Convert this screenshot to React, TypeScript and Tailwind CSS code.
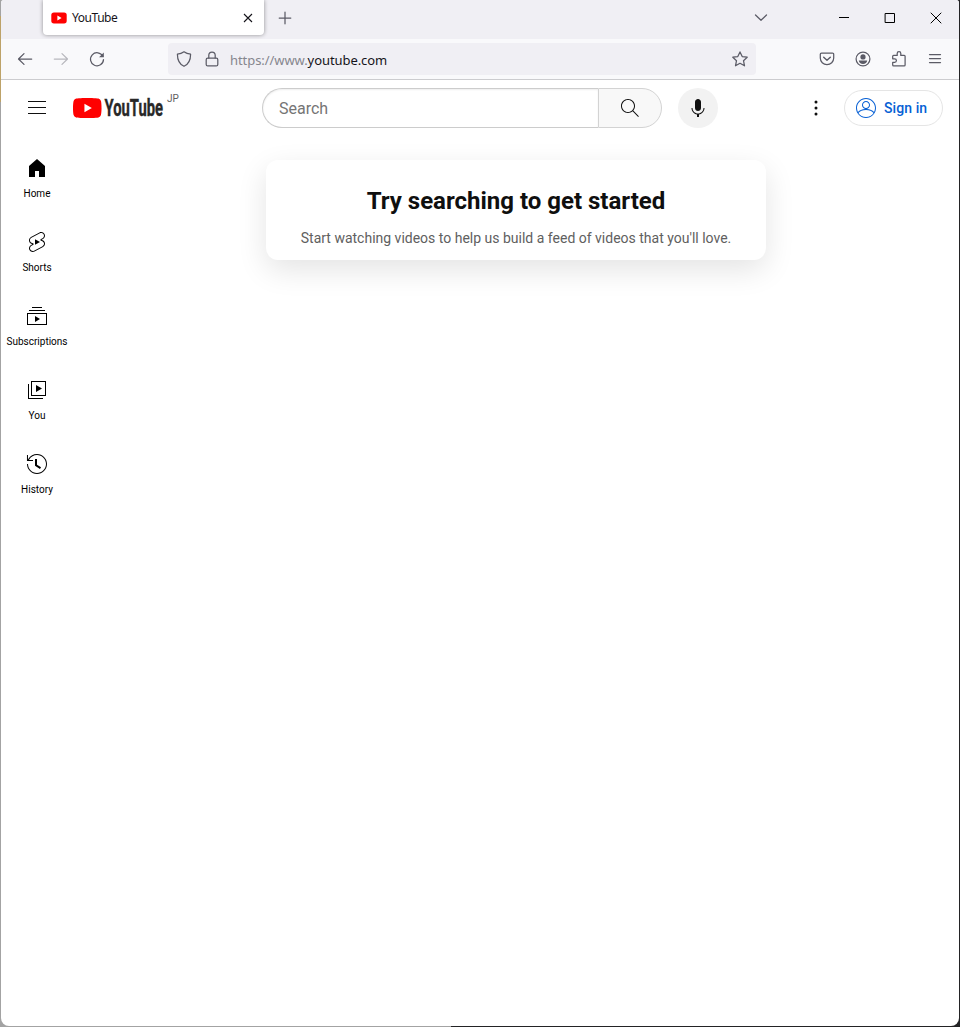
import type { ReactNode } from 'react';

const guideItems = [
  {
    label: 'Home',
    path: 'M4,10V21h6V15h4v6h6V10L12,3Z',
  },
  {
    label: 'Shorts',
    path: 'M10 14.65v-5.3L15 12l-5 2.65zm7.77-4.33c-.77-.32-1.2-.5-1.2-.5L18 9.06c1.84-.96 2.53-3.23 1.56-5.06s-3.24-2.53-5.07-1.56L6 6.94c-1.29.68-2.07 2.04-2 3.49.07 1.42.93 2.67 2.22 3.25.03.01 1.2.5 1.2.5L6 14.93c-1.83.97-2.53 3.24-1.56 5.07.97 1.83 3.24 2.53 5.07 1.56l8.5-4.5c1.29-.68 2.06-2.04 1.99-3.49-.07-1.42-.94-2.68-2.23-3.25zm-.23 5.86l-8.5 4.5c-1.34.71-3.01.2-3.72-1.14-.71-1.34-.2-3.01 1.14-3.72l2.04-1.08v-1.21l-.69-.28-1.11-.46c-.99-.41-1.65-1.35-1.7-2.41-.05-1.06.52-2.06 1.46-2.56l8.5-4.5c1.34-.71 3.01-.2 3.72 1.14.71 1.34.2 3.01-1.14 3.72L15.5 9.26v1.21l1.8.74c.99.41 1.65 1.35 1.7 2.41.05 1.06-.52 2.06-1.46 2.56z',
  },
  {
    label: 'Subscriptions',
    path: 'M10,18v-6l5,3L10,18z M17,3H7v1h10V3z M20,6H4v1h16V6z M22,9H2v12h20V9z M3,10h18v10H3V10z',
  },
  {
    label: 'You',
    path: 'm11 7 6 3.5-6 3.5V7zm7 13H4V6H3v15h15v-1zm3-2H6V3h15v15zM7 17h13V4H7v13z',
  },
  {
    label: 'History',
    path: 'M14.97,16.95L10,13.87V7h2v5.76l4.03,2.49L14.97,16.95z M22,12c0,5.51-4.49,10-10,10S2,17.51,2,12h1c0,4.96,4.04,9,9,9s9-4.04,9-9s-4.04-9-9-9C8.81,3,5.92,4.64,4.28,7.38C4.17,7.56,4.06,7.75,3.97,7.94C3.96,7.96,3.95,7.98,3.94,8H8v1H1.96V3h1v4.74C3,7.65,3.03,7.57,3.07,7.49C3.18,7.27,3.3,7.07,3.42,6.86C5.22,3.86,8.51,2,12,2C17.51,2,22,6.49,22,12z',
  },
];

const ACCOUNT =
  'M12,2C6.48,2,2,6.48,2,12c0,5.52,4.48,10,10,10s10-4.48,10-10C22,6.48,17.52,2,12,2z M12,3c4.96,0,9,4.04,9,9c0,1.42-0.34,2.76-0.93,3.96c-1.53-1.72-3.98-2.89-7.38-3.03C14.57,12.6,16,10.97,16,9c0-2.21-1.79-4-4-4C9.79,5,8,6.79,8,9c0,1.97,1.43,3.6,3.31,3.93c-3.4,0.14-5.85,1.31-7.38,3.03C3.34,14.76,3,13.42,3,12C3,7.04,7.04,3,12,3z M9,9c0-1.65,1.35-3,3-3s3,1.35,3,3c0,1.65-1.35,3-3,3S9,10.65,9,9z M12,21c-3.16,0-5.94-1.64-7.55-4.12C6.01,14.93,8.61,13.9,12,13.9c3.39,0,5.99,1.03,7.55,2.98C17.94,19.36,15.16,21,12,21z';
const SEARCH =
  'M20.87,20.17l-5.59-5.59C16.35,13.35,17,11.75,17,10c0-3.87-3.13-7-7-7s-7,3.13-7,7s3.13,7,7,7c1.75,0,3.35-0.65,4.58-1.71l5.59,5.59L20.87,20.17z M10,16c-3.31,0-6-2.69-6-6s2.69-6,6-6s6,2.69,6,6S13.31,16,10,16z';
const MIC =
  'M12 3C10.34 3 9 4.37 9 6.07V11.93C9 13.63 10.34 15 12 15C13.66 15 15 13.63 15 11.93V6.07C15 4.37 13.66 3 12 3ZM18.5 12H17.5C17.5 15.03 15.03 17.5 12 17.5C8.97 17.5 6.5 15.03 6.5 12H5.5C5.5 15.24 7.89 17.93 11 18.41V21H13V18.41C16.11 17.93 18.5 15.24 18.5 12Z';

function YtIcon({ path }: { path: string }) {
  return (
    <svg className="w-6 h-6 shrink-0" viewBox="0 0 24 24" fill="currentColor">
      <path d={path} />
    </svg>
  );
}

// 16px browser chrome glyph in a toolbar-sized button
function ChromeButton({ children, className = 'w-9' }: { children: ReactNode; className?: string }) {
  return (
    <button className={`flex items-center justify-center h-8 shrink-0 ${className}`}>
      <svg
        className="w-4 h-4 overflow-visible"
        viewBox="0 0 16 16"
        fill="none"
        stroke="currentColor"
        strokeWidth={1.25}
        strokeLinecap="round"
        strokeLinejoin="round"
      >
        {children}
      </svg>
    </button>
  );
}

function TabStrip() {
  return (
    <div className="flex items-start h-[39px] bg-[#f0eff4] pl-[42px] text-[#15141a]">
      <div className="flex items-center w-[221px] h-[35px] bg-white rounded-b-[4px] shadow-[0_0_4px_rgba(0,0,0,0.4)] pl-2 pr-2">
        <svg className="w-4 h-4" viewBox="0 0 16 16">
          <rect x="0.3" y="2.4" width="15.4" height="11" rx="2.6" fill="#f00" />
          <path d="M6.4 5.5v4.9L10.6 8z" fill="#fff" />
        </svg>
        <span className="ml-[5px] flex-1 text-[12px] leading-none tracking-[-0.45px]">YouTube</span>
        <svg className="w-4 h-4" viewBox="0 0 16 16" fill="none" stroke="currentColor" strokeWidth={1.1}>
          <path d="M4 4l8 8M12 4l-8 8" />
        </svg>
      </div>
      <div className="flex items-center flex-1 h-[35px] text-[#5b5b66]">
        <ChromeButton className="w-[42px]">
          <path d="M8 2.200v11.600M2.200 8h11.600" />
        </ChromeButton>
        <div className="flex-1" />
        <ChromeButton className="w-10">
          <path d="M2.500 5l5.500 5.300L13.500 5" />
        </ChromeButton>
        <div className="flex ml-10 text-black">
          <ChromeButton className="w-[46px]">
            <path d="M3 7.500h10" strokeWidth={1} strokeLinecap="butt" />
          </ChromeButton>
          <ChromeButton className="w-[46px]">
            <path d="M3.500 3.500h9v9h-9z" strokeWidth={1} strokeLinejoin="miter" />
          </ChromeButton>
          <ChromeButton className="w-[46px]">
            <path d="M3 3l10 10M13 3L3 13" strokeWidth={1} />
          </ChromeButton>
        </div>
      </div>
    </div>
  );
}

function Toolbar() {
  return (
    <div className="flex items-center h-[41px] bg-[#f9f9fb] border-b border-[#cccccf] pl-1.5 pr-[7px] text-[#5b5b66]">
      <ChromeButton>
        <path d="M14.700 8H1.600M7 2.600L1.500 8L7 13.400" />
      </ChromeButton>
      <div className="text-[#b8b8be]">
        <ChromeButton>
          <path d="M1.300 8H14.400M9 2.600L14.500 8L9 13.400" />
        </ChromeButton>
      </div>
      <ChromeButton>
        <path d="M13.800 5.300A6.500 6.500 0 1 0 14.500 8.600" />
        <path d="M14.800 1.500v4.700h-4.700z" fill="currentColor" stroke="none" />
      </ChromeButton>

      <div className="flex items-center w-[588px] h-8 ml-[53px] rounded bg-[#f0eff4] pl-0.5 pr-0.5">
        <ChromeButton className="w-7">
          <path d="M8 .8C6 2.300 3.800 3 1.400 3.200C1.400 9 3 13 8 15.300C13 13 14.600 9 14.600 3.200C12.200 3 10 2.300 8 .8z" />
        </ChromeButton>
        <ChromeButton className="w-7">
          <rect x="2.200" y="7.200" width="11.600" height="7.700" rx="1.500" />
          <path d="M4.800 7V4.200a3.200 3.200 0 0 1 6.400 0V7" />
        </ChromeButton>
        <span className="ml-1 flex-1 text-[13px] leading-5 tracking-[-0.07px] text-[#86868e] pt-0.5">
          https://www.<span className="text-[#15141a]">youtube.com</span>
        </span>
        <ChromeButton className="w-7">
          <path d="M8 .9l2.200 4.700l5 .6l-3.700 3.500l1 5.100L8 12.300l-4.500 2.500l1-5.100L.8 6.200l5-.6z" />
        </ChromeButton>
      </div>

      <div className="flex ml-auto">
        <ChromeButton className="w-[37px]">
          <path d="M2.500 2h11a1.200 1.200 0 0 1 1.200 1.200V7a6.700 6.700 0 0 1-13.400 0V3.200A1.200 1.200 0 0 1 2.500 2z" />
          <path d="M4.700 6.200L8 9.300l3.300-3.100" strokeWidth={1.400} />
        </ChromeButton>
        <ChromeButton>
          <circle cx="8" cy="8" r="6.900" />
          <circle cx="8" cy="5.900" r="2.600" fill="currentColor" stroke="none" />
          <path d="M3.800 9.500h8.400c0 2-1.900 3.400-4.200 3.400S3.800 11.500 3.800 9.500z" fill="currentColor" stroke="none" />
        </ChromeButton>
        <ChromeButton>
          <path d="M2.600 14.900h10.600a.9.900 0 0 0 .9-.9V5.300a.9.900 0 0 0-.9-.9H9.800V2.500a1.800 1.800 0 0 0-3.600 0v1.900H2.600a.9.900 0 0 0-.9.900v2.500h1.900a1.800 1.800 0 0 1 0 3.600H1.700V14a.9.900 0 0 0 .9.900z" />
        </ChromeButton>
        <ChromeButton className="w-[35px]">
          <path d="M2.500 3.500h11M2.500 7.500h11M2.500 11.500h11" />
        </ChromeButton>
      </div>
    </div>
  );
}

function Logo() {
  return (
    <div className="flex items-start w-[110px] h-7">
      <svg className="w-[90px] h-7 overflow-visible" viewBox="0 0 90 28">
        <path
          d="M27.970 7.120A3.580 3.580 0 0 0 25.450 4.600C23.220 4 14.280 4 14.280 4S5.350 4 3.120 4.600A3.580 3.580 0 0 0 .6 7.120C0 9.350 0 14 0 14s0 4.650.6 6.880a3.580 3.580 0 0 0 2.520 2.520C5.350 24 14.280 24 14.280 24s8.940 0 11.170-.6a3.580 3.580 0 0 0 2.520-2.520c.6-2.230.6-6.880.6-6.880s0-4.650-.6-6.880z"
          fill="#f00"
        />
        <path d="M11.430 18.280L18.850 14l-7.420-4.280z" fill="#fff" />
        <text
          x="31.500"
          y="22.300"
          textLength="58.500"
          lengthAdjust="spacingAndGlyphs"
          className="text-[24px] font-bold"
          fill="#282828"
          stroke="#282828"
          strokeWidth={0.4}
        >
          YouTube
        </text>
      </svg>
      <span className="ml-1 text-[10px] leading-[10px] text-[#606060]">JP</span>
    </div>
  );
}

function Masthead() {
  return (
    <header className="flex items-center h-14 pl-6 pr-4">
      <button className="flex items-center justify-center w-6 h-6">
        <svg className="w-6 h-6" viewBox="0 0 24 24" fill="currentColor">
          <path d="M21,6H3V5h18V6z M21,11H3v1h18V11z M21,17H3v1h18V17z" />
        </svg>
      </button>
      <div className="ml-6">
        <Logo />
      </div>

      <div className="flex ml-[79px] w-[400px] h-10">
        <div className="flex items-center flex-1 rounded-l-full border border-r-0 border-[#ccc] pl-4 shadow-[inset_0_1px_2px_#eee]">
          <span className="pt-0.5 text-base leading-6 text-[#757575]">Search</span>
        </div>
        <button className="flex items-center justify-center w-16 rounded-r-full border border-[#d3d3d3] bg-[#f8f8f8]">
          <YtIcon path={SEARCH} />
        </button>
      </div>
      <button className="flex items-center justify-center w-10 h-10 ml-4 rounded-full bg-[#f2f2f2]">
        <YtIcon path={MIC} />
      </button>

      <div className="flex items-center ml-auto">
        <svg className="w-6 h-6" viewBox="0 0 24 24" fill="currentColor">
          <circle cx="12" cy="6" r="1.500" />
          <circle cx="12" cy="12" r="1.500" />
          <circle cx="12" cy="18" r="1.500" />
        </svg>
        <button className="flex items-center w-[99px] h-9 ml-4 pl-[9px] rounded-full border border-[#e5e5e5] text-[#065fd4]">
          <YtIcon path={ACCOUNT} />
          <span className="ml-1.5 text-sm font-medium tracking-[0.08px]">Sign in</span>
        </button>
      </div>
    </header>
  );
}

export default function App() {
  return (
    <div className="relative w-[960px] h-[1027px] px-px pb-px overflow-hidden bg-[linear-gradient(90deg,#a3a3a3_451px,#232325_451px)] font-['Noto_Sans',sans-serif]">
      {/* Desktop edge visible beside the window */}
      <div className="absolute left-0 top-4 w-px h-[86px] bg-[#bda268]" />

      <div className="flex flex-col h-full rounded-b-lg rounded-t-[3px] overflow-hidden bg-white">
        <TabStrip />
        <Toolbar />
        <div className="flex flex-col flex-1 font-['Roboto',sans-serif] text-[#0f0f0f]">
          <Masthead />
          <div className="flex flex-1">
            <nav className="flex flex-col w-[72px] pt-1 text-black">
              {guideItems.map((item) => (
                <a key={item.label} className="flex flex-col items-center h-[74px] pt-4">
                  <YtIcon path={item.path} />
                  <span className="mt-[7px] text-[10px] leading-[14px] whitespace-nowrap">{item.label}</span>
                </a>
              ))}
            </nav>
            <main className="flex-1">
              <div className="flex flex-col items-center w-[500px] h-[100px] mt-6 mx-auto pt-[25px] rounded-xl bg-white shadow-[0_10px_30px_rgba(0,0,0,0.11)]">
                <h1 className="text-2xl leading-8 font-bold">Try searching to get started</h1>
                <p className="mt-[11px] text-sm leading-5 text-[#606060]">
                  Start watching videos to help us build a feed of videos that you'll love.
                </p>
              </div>
            </main>
          </div>
        </div>
      </div>
    </div>
  );
}
